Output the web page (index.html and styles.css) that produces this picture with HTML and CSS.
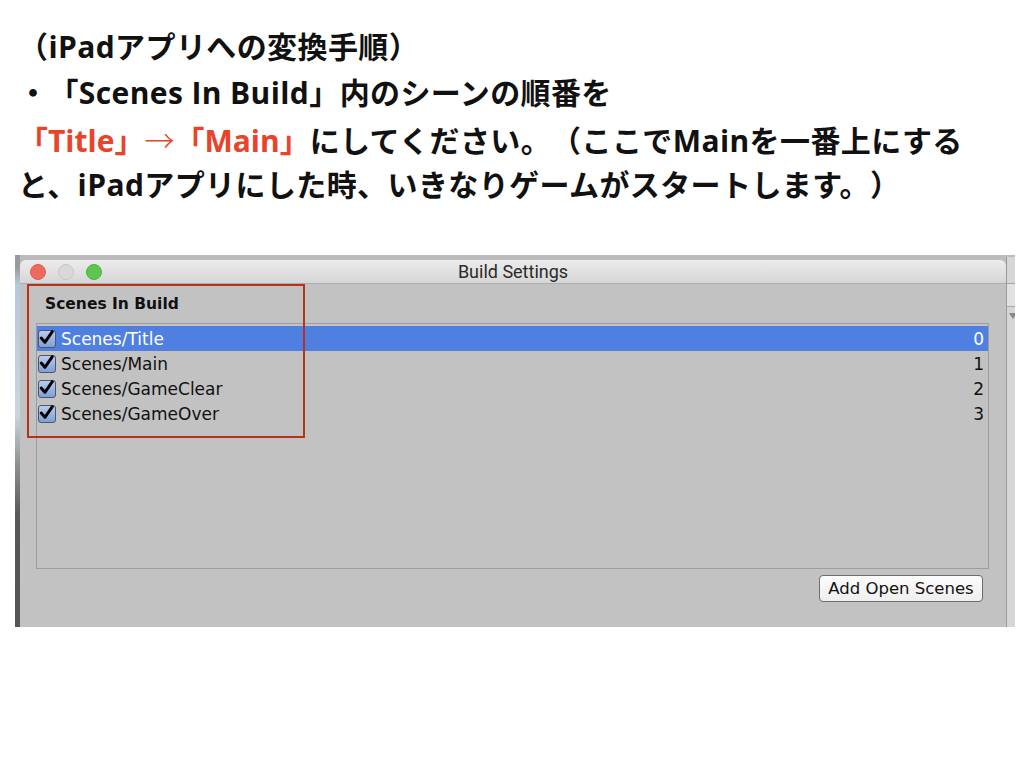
FILE: index.html
```html
<!DOCTYPE html>
<html lang="ja">
<head>
    <meta charset="UTF-8">
    <title>iPadアプリへの変換手順</title>
    <link rel="stylesheet" href="styles.css">
</head>
<body>

    <div class="note">
        <p>（iPadアプリへの変換手順）</p>
        <p>・「Scenes In Build」内のシーンの順番を</p>
        <p><span class="accent">「Title」<span class="arrow">→</span>「Main」</span>にしてください。（ここでMainを一番上にする</p>
        <p>と、iPadアプリにした時、いきなりゲームがスタートします。）</p>
    </div>

    <div class="shot">
        <div class="edge-left"></div>
        <div class="window">
            <div class="titlebar">
                <div class="lights">
                    <span class="light close"></span>
                    <span class="light idle"></span>
                    <span class="light zoom"></span>
                </div>
                <div class="title">Build Settings</div>
            </div>
            <div class="content">
                <div class="section-title">Scenes In Build</div>
                <div class="scene-list">
                    <div class="scene-row selected">
                        <span class="check"><svg viewBox="0 0 16 16"><path d="M3 8.5 L6.5 12.5 L13.5 2.5" /></svg></span>
                        <span class="scene-name">Scenes/Title</span>
                        <span class="scene-index">0</span>
                    </div>
                    <div class="scene-row">
                        <span class="check"><svg viewBox="0 0 16 16"><path d="M3 8.5 L6.5 12.5 L13.5 2.5" /></svg></span>
                        <span class="scene-name">Scenes/Main</span>
                        <span class="scene-index">1</span>
                    </div>
                    <div class="scene-row">
                        <span class="check"><svg viewBox="0 0 16 16"><path d="M3 8.5 L6.5 12.5 L13.5 2.5" /></svg></span>
                        <span class="scene-name">Scenes/GameClear</span>
                        <span class="scene-index">2</span>
                    </div>
                    <div class="scene-row">
                        <span class="check"><svg viewBox="0 0 16 16"><path d="M3 8.5 L6.5 12.5 L13.5 2.5" /></svg></span>
                        <span class="scene-name">Scenes/GameOver</span>
                        <span class="scene-index">3</span>
                    </div>
                </div>
                <div class="actions">
                    <button class="mac-button">Add Open Scenes</button>
                </div>
            </div>
        </div>
        <div class="edge-right">
            <div class="edge-box"></div>
            <div class="edge-arrow"></div>
        </div>
        <div class="highlight"></div>
    </div>

</body>
</html>
```

FILE: styles.css
```css
body {
    margin: 0;
    background: #fff;
    font-family: "Noto Sans CJK JP", sans-serif;
}

.note {
    padding: 24px 0 0 18px;
    font-family: "Open Sans", "Noto Sans CJK JP", sans-serif;
    font-size: 30px;
    font-weight: 700;
    line-height: 46px;
    letter-spacing: 0.4px;
    color: #111;
    text-spacing-trim: space-all;
}

    .note p {
        margin: 0;
        height: 46px;
        white-space: nowrap;
    }

    .note .accent {
        color: #e8442b;
        letter-spacing: 0;
    }

    .note .arrow {
        font-weight: 300;
        font-family: "Noto Sans CJK JP", sans-serif;
    }

.shot {
    position: relative;
    display: flex;
    margin: 47px 0 0 15px;
    width: 1000px;
    height: 372px;
    background: #bcbcbc;
    overflow: hidden;
}

.edge-left {
    width: 5px;
    background: linear-gradient(#9a9a9a 0, #9a9a9a 12px, #b5c8dc 30px, #c9d6df 160px, #8e9090 210px, #5a5756 260px, #555 100%);
}

.edge-right {
    width: 8px;
    margin-top: 2px;
    background: #d6d6d6;
    border-left: 1px solid #9a9a9a;
}

    .edge-right .edge-box {
        margin-top: 26px;
        height: 22px;
        border-top: 1px solid #a8a8a8;
        border-bottom: 1px solid #a8a8a8;
        background: #e2e2e2;
    }

    .edge-right .edge-arrow {
        margin: 6px 0 0 2px;
        width: 0;
        height: 0;
        border-left: 4px solid transparent;
        border-right: 4px solid transparent;
        border-top: 6px solid #888;
    }

.window {
    flex: 1;
    margin-top: 5px;
    background: #c2c2c2;
    border-radius: 6px 6px 0 0;
    display: flex;
    flex-direction: column;
    font-family: "DejaVu Sans", sans-serif;
    color: #111;
}

.titlebar {
    position: relative;
    height: 23px;
    border-bottom: 1px solid #adadad;
    border-radius: 6px 6px 0 0;
    background: linear-gradient(#ececec, #d6d6d6);
    display: flex;
    align-items: center;
    justify-content: center;
}

.lights {
    position: absolute;
    left: 10px;
    top: 4px;
    display: flex;
    gap: 12px;
}

.light {
    width: 16px;
    height: 16px;
    border-radius: 50%;
    box-sizing: border-box;
}

    .light.close {
        background: #ee6a5e;
        border: 1px solid #e05a4f;
    }

    .light.idle {
        background: #d9d9d9;
        border: 1px solid #c6c6c6;
    }

    .light.zoom {
        background: #5ec64f;
        border: 1px solid #4cb23f;
    }

.title {
    font-family: Roboto, sans-serif;
    font-size: 18px;
    color: #2a2a2a;
}

.content {
    padding: 10px 17px 0 16px;
}

.section-title {
    padding-left: 9px;
    font-size: 15.5px;
    font-weight: 700;
    line-height: 20px;
}

.scene-list {
    margin-top: 9px;
    height: 242px;
    padding-top: 2px;
    border: 1px solid #9d9d9d;
}

.scene-row {
    display: flex;
    align-items: center;
    height: 25px;
    padding: 0 4px 0 1px;
    font-size: 17px;
}

    .scene-row.selected {
        background: #4f7fe0;
        color: #fff;
    }

.check {
    width: 18px;
    height: 18px;
    margin-right: 5px;
    box-sizing: border-box;
    border: 1px solid #50566a;
    border-radius: 3px;
    background: linear-gradient(#b8cdee, #7e9fd8);
    display: flex;
}

    .check svg {
        width: 19px;
        height: 19px;
        margin: -3px 0 0 -1px;
    }

    .check path {
        fill: none;
        stroke: #000;
        stroke-width: 2.8;
        stroke-linecap: round;
        stroke-linejoin: round;
    }

.scene-name {
    flex: 1;
}

.scene-index {
    text-align: right;
}

.actions {
    display: flex;
    justify-content: flex-end;
    padding: 6px 6px 0 0;
}

.mac-button {
    height: 27px;
    width: 164px;
    padding: 0;
    font-family: "DejaVu Sans", sans-serif;
    font-size: 16.5px;
    color: #111;
    border: 1px solid #6d6d6d;
    border-radius: 4px;
    background: linear-gradient(#fdfdfd, #eeeeee);
}

.highlight {
    position: absolute;
    left: 12px;
    top: 29px;
    width: 274px;
    height: 150px;
    border: 2px solid #b5321f;
}
```
